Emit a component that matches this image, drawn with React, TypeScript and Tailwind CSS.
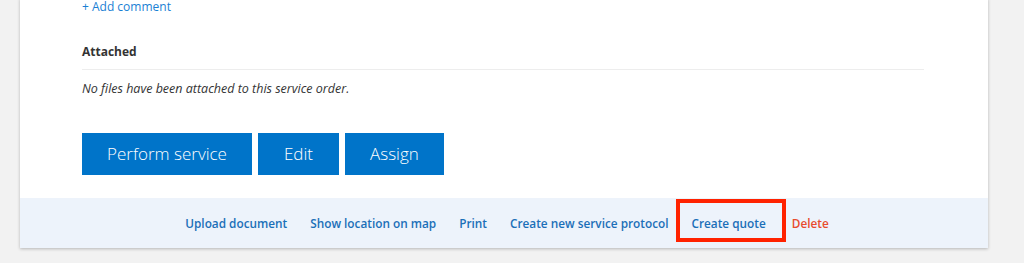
export default function App() {
  const links = ['Upload document', 'Show location on map', 'Print', 'Create new service protocol']

  return (
    <div className="h-[263px] overflow-hidden bg-[#f2f2f2] font-['Open_Sans',sans-serif] text-[#333]">
      <div className="ml-[20px] w-[968px] bg-white shadow-[0_1px_3px_rgba(0,0,0,0.25)]">
        <div className="pl-[62px] pr-[64px] pb-[23px]">
          <a className="-mt-[2px] block text-[12px] leading-[18px] text-[#1a7fd4]">+ Add comment</a>

          <div className="mt-[27px] border-b border-[#ededed] pb-[8px]">
            <h3 className="text-[12px] font-bold leading-[18px] text-[#333]">Attached</h3>
          </div>
          <p className="mt-[10px] text-[12.5px] italic leading-[18px] text-[#333]">
            No files have been attached to this service order.
          </p>

          <div className="mt-[35px] flex gap-[6px]">
            <button className="h-[42px] bg-[#0074c9] px-[25px] text-[17px] font-light text-white">Perform service</button>
            <button className="h-[42px] bg-[#0074c9] px-[26px] text-[17px] font-light text-white">Edit</button>
            <button className="h-[42px] bg-[#0074c9] px-[25px] text-[17px] font-light text-white">Assign</button>
          </div>
        </div>

        {/* Actions footer */}
        <div className="flex h-[50px] items-center justify-center gap-[23px] bg-[#edf3fb] pl-[6px] text-[11.8px] font-semibold leading-[18px]">
          {links.map(l => (
            <a key={l} className="text-[#1b6fb8]">{l}</a>
          ))}
          <span className="relative">
            <a className="text-[#1b6fb8]">Create quote</a>
            <span className="absolute -left-[16px] -right-[20px] -top-[15px] -bottom-[10px] border-[4px] border-[#ff2200]" />
          </span>
          <a className="ml-[3px] text-[#e84b2d]">Delete</a>
        </div>
      </div>
    </div>
  )
}
